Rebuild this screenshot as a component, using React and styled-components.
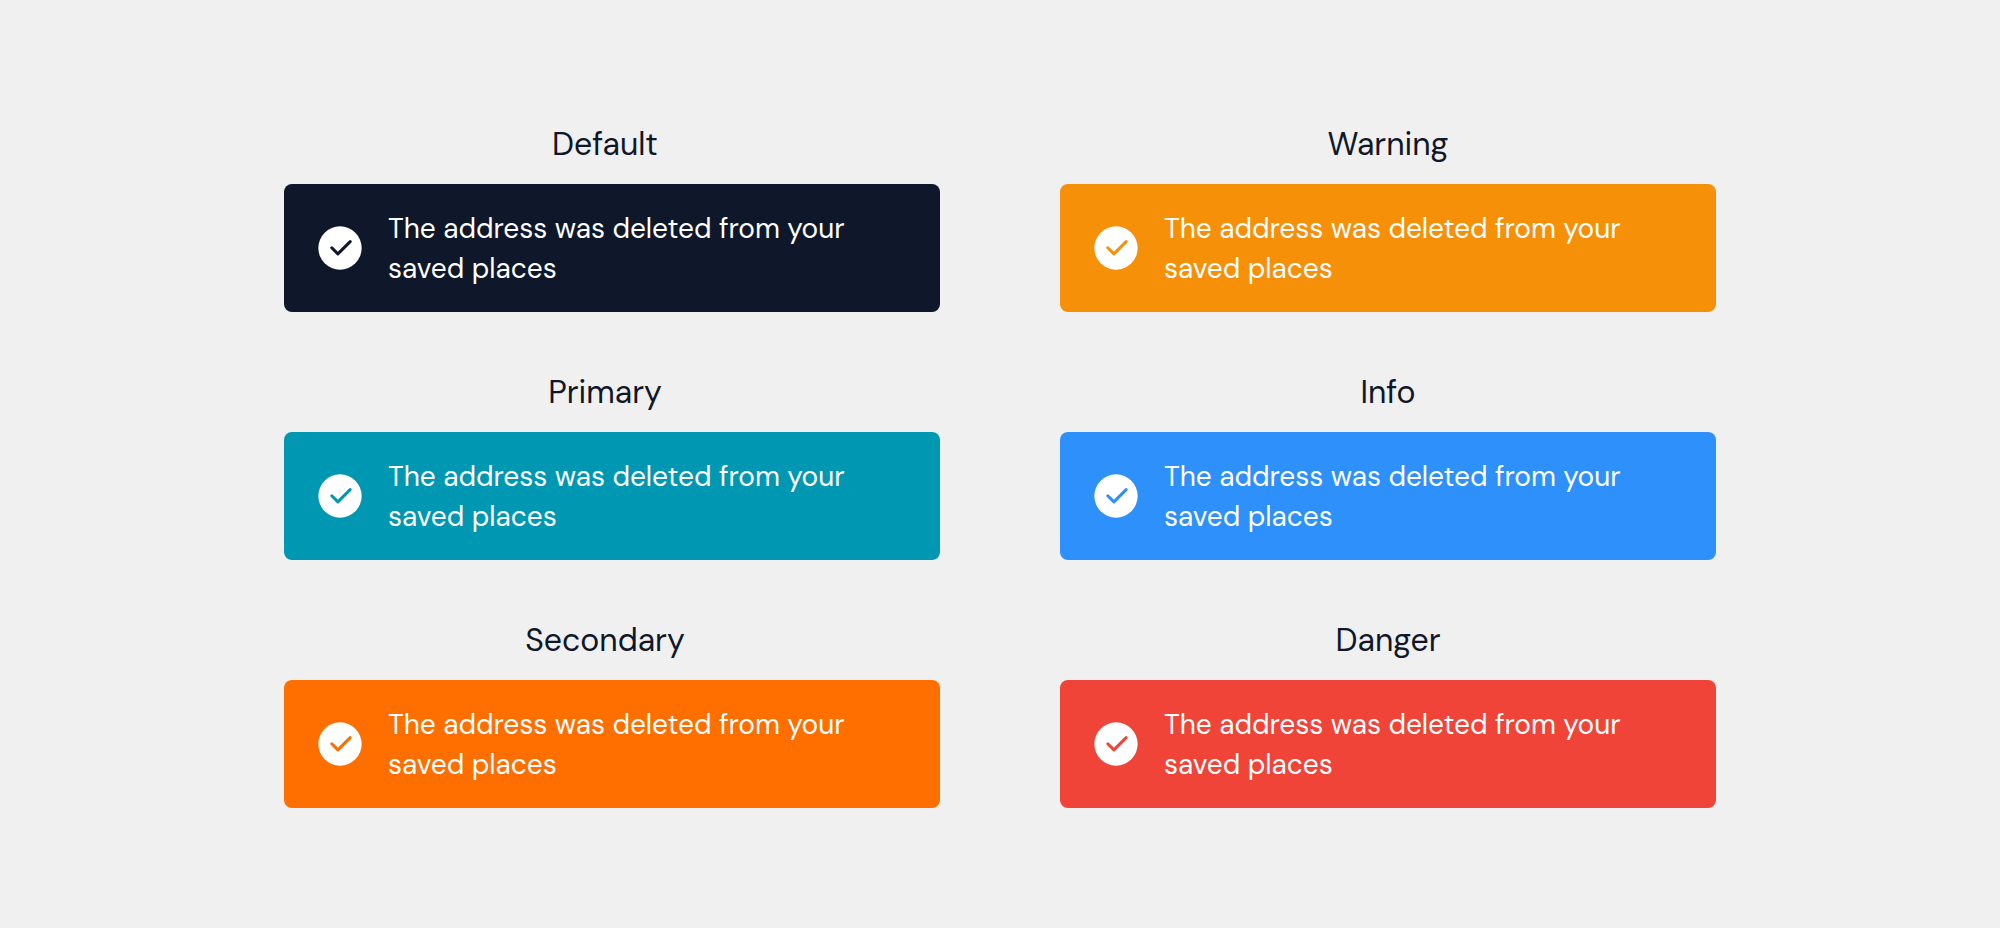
import React from "react";
import styled, { createGlobalStyle } from "styled-components";

const columns = [
  {
    name: "brand",
    titleInset: "14px",
    alerts: [
      { title: "Default", color: "#0f172a" },
      { title: "Primary", color: "#0097b2" },
      { title: "Secondary", color: "#ff6f00" },
    ],
  },
  {
    name: "status",
    titleInset: "0",
    alerts: [
      { title: "Warning", color: "#f79009" },
      { title: "Info", color: "#2e90fa" },
      { title: "Danger", color: "#f04438" },
    ],
  },
];

const TickCircle = ({ color }) => (
  <Icon viewBox="0 0 24 24" fill="none" aria-hidden="true">
    <circle cx="12" cy="12" r="10" fill="#fff" />
    <path
      d="M8.2 11.9l2.83 2.83 5.67-5.66"
      stroke={color}
      strokeWidth="1.4"
      strokeLinecap="round"
      strokeLinejoin="round"
    />
  </Icon>
);

const App = () => {
  return (
    <>
      <GlobalStyle />
      <Page>
        {columns.map(({ name, titleInset, alerts }) => (
          <Column key={name}>
            {alerts.map(({ title, color }) => (
              <AlertGroup key={title}>
                <Title $inset={titleInset}>{title}</Title>
                <Alert role="status" $color={color}>
                  <TickCircle color={color} />
                  <Message>The address was deleted from your saved places</Message>
                </Alert>
              </AlertGroup>
            ))}
          </Column>
        ))}
      </Page>
    </>
  );
};

const GlobalStyle = createGlobalStyle`
  * {
    box-sizing: border-box;
  }

  body {
    margin: 0;
    background-color: #f0f0f0;
    font-family: "DM Sans", Inter, sans-serif;
  }
`;

const Page = styled.main`
  display: flex;
  justify-content: center;
  gap: 120px;
  padding: 124px 40px 120px;
`;

const Column = styled.div`
  display: flex;
  flex: 1;
  flex-direction: column;
  gap: 60px;
  max-width: 656px;
`;

const AlertGroup = styled.section`
  display: flex;
  flex-direction: column;
  gap: 20px;
`;

const Title = styled.h2`
  margin: 0;
  padding-right: ${({ $inset }) => $inset};
  color: #0f172a;
  font-size: 32px;
  font-weight: 400;
  line-height: 40px;
  text-align: center;
`;

const Alert = styled.div`
  display: flex;
  align-items: center;
  gap: 22px;
  padding: 23px 30px;
  border-radius: 8px;
  background-color: ${({ $color }) => $color};
`;

const Icon = styled.svg`
  flex: none;
  width: 52px;
  height: 52px;
`;

const Message = styled.p`
  margin: 0;
  padding-top: 2px;
  max-width: 480px;
  color: #fff;
  font-size: 28px;
  line-height: 40px;
`;

export default App;
